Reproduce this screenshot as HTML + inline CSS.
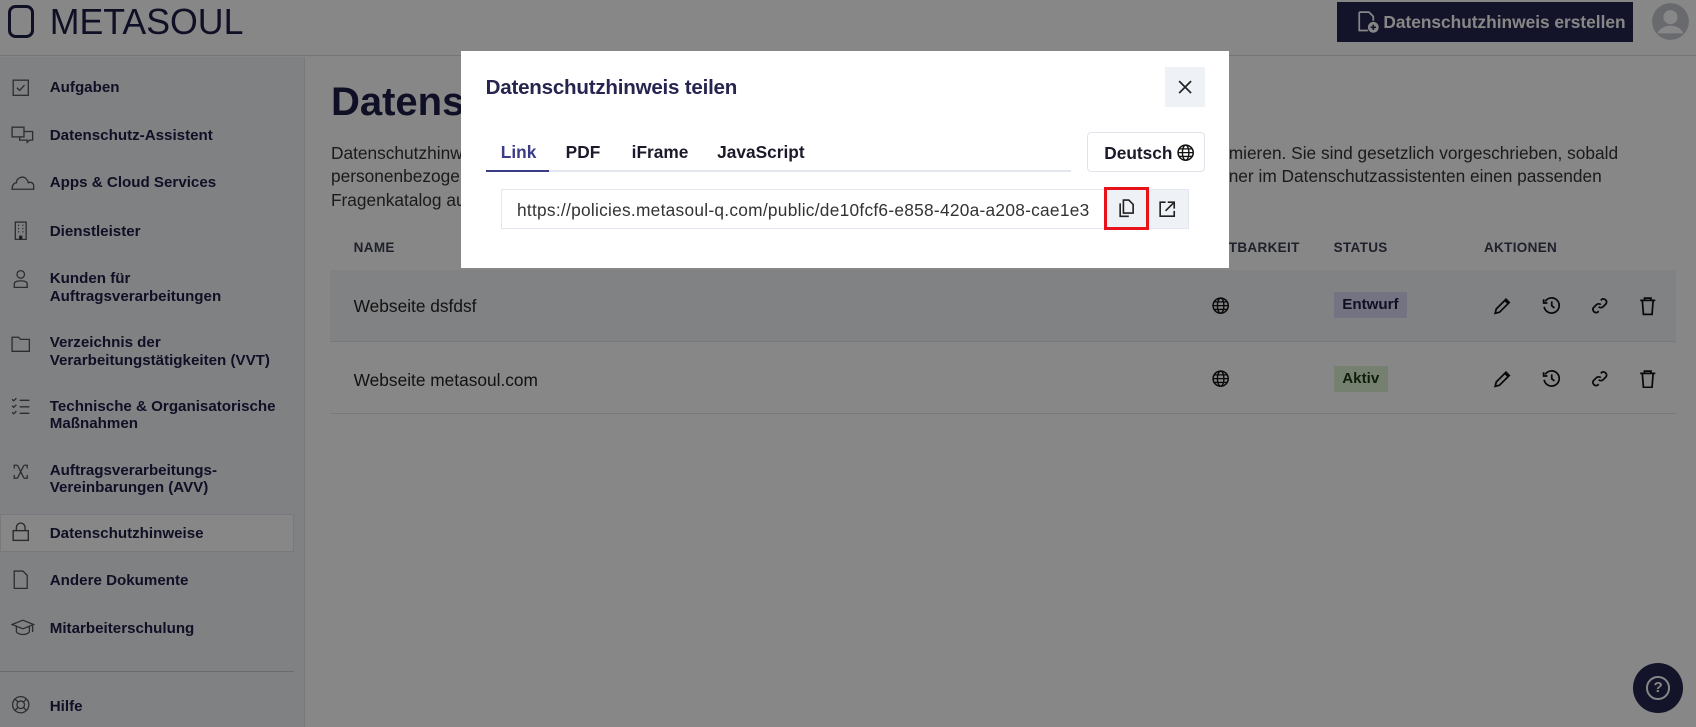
<!DOCTYPE html>
<html><head><meta charset="utf-8"><style>
*{box-sizing:border-box;margin:0;padding:0}
html,body{width:1696px;height:727px;overflow:hidden;background:#fff}
#w{width:1568px;height:672px;position:relative;zoom:1.0816;font-family:"Liberation Sans",Arial,sans-serif;color:#1e1e46;background:#fff;overflow:hidden}
.a{position:absolute}
.nav{position:absolute;left:46px;font-size:14px;font-weight:bold;color:#1e1e46;line-height:16px}
.ic{position:absolute;left:10px;width:18px;height:18px}
.hd{position:absolute;top:222px;font-size:12.5px;font-weight:bold;color:#3a3f52;letter-spacing:.3px}
.rowt{position:absolute;left:327px;font-size:16px;color:#222}
svg{display:block}
</style></head><body><div id="w">
<div class="a" style="left:0;top:0;width:1568px;height:52px;border-bottom:1px solid #ddd;background:#fff"></div>
<div class="a" style="left:7px;top:5px;width:24px;height:30px;border:3.5px solid #1e1e46;border-radius:7px"></div>
<div class="a" style="left:46px;top:2px;font-size:33px;color:#1e1e46;letter-spacing:0px">METASOUL</div>
<div class="a" style="left:1236px;top:2px;width:274px;height:37px;background:#25254f;color:#fff;font-weight:bold;font-size:16px;line-height:37px;padding-left:43px">Datenschutzhinweis erstellen</div>
<svg class="a" style="left:1254px;top:9px" width="22" height="22" viewBox="0 0 22 22"><path d="M3 2h9l4 4v4M3 2v17h8" fill="none" stroke="#fff" stroke-width="1.6"/><circle cx="16" cy="16" r="5" fill="#fff"/><path d="M16 13.5v5M13.5 16h5" stroke="#25254f" stroke-width="1.5"/></svg>
<svg class="a" style="left:1526px;top:2px" width="36" height="36" viewBox="0 0 36 36"><circle cx="18" cy="18" r="17" fill="#c4c8d0"/><circle cx="18" cy="14" r="6.5" fill="#fff"/><path d="M6 29c3-6 8-7 12-7s9 1 12 7" fill="#fff"/></svg>
<div class="a" style="left:0;top:53px;width:282px;height:619px;background:#f1f3f7;border-right:1px solid #e2e4ea"></div>
<div class="a" style="left:0;top:475px;width:272px;height:35px;background:#fff;border:1px solid #e3e5ea"></div>
<div class="a" style="left:0;top:620px;width:272px;height:1px;background:#ccc"></div>
<div class="nav" style="top:73px">Aufgaben</div>
<div class="nav" style="top:117px">Datenschutz-Assistent</div>
<div class="nav" style="top:161px">Apps &amp; Cloud Services</div>
<div class="nav" style="top:206px">Dienstleister</div>
<div class="nav" style="top:250px">Kunden für<br>Auftragsverarbeitungen</div>
<div class="nav" style="top:309px">Verzeichnis der<br>Verarbeitungstätigkeiten (VVT)</div>
<div class="nav" style="top:368px">Technische &amp; Organisatorische<br>Maßnahmen</div>
<div class="nav" style="top:427px">Auftragsverarbeitungs-<br>Vereinbarungen (AVV)</div>
<div class="nav" style="top:485px">Datenschutzhinweise</div>
<div class="nav" style="top:529px">Andere Dokumente</div>
<div class="nav" style="top:573px">Mitarbeiterschulung</div>
<div class="nav" style="top:645px">Hilfe</div>
<svg class="ic" style="top:72px" viewBox="0 0 18 18"><rect x="2" y="2" width="14" height="14" fill="none" stroke="#555" stroke-width="1.2"/><path d="M5.5 9l2.5 2.5 4.5-5" fill="none" stroke="#555" stroke-width="1.2"/></svg>
<svg class="ic" style="top:116px;width:22px" viewBox="0 0 22 18"><rect x="1" y="2" width="11" height="9" fill="none" stroke="#555" stroke-width="1.2"/><path d="M12 6h8v8h-3l-2 2v-2H8v-3" fill="none" stroke="#555" stroke-width="1.2"/></svg>
<svg class="ic" style="top:160px;width:22px" viewBox="0 0 22 18"><path d="M1 15h20v-3c0-3-3-4-5-3-1-4-4-6-7-5-3 1-4 3-4 5-2 0-4 2-4 6z" fill="none" stroke="#555" stroke-width="1.2"/></svg>
<svg class="ic" style="top:204px" viewBox="0 0 18 18"><rect x="4" y="1" width="10" height="16" fill="none" stroke="#555" stroke-width="1.2"/><path d="M6.5 4h1M10.5 4h1M6.5 7h1M10.5 7h1M6.5 10h1M10.5 10h1M8 17v-3h2v3" stroke="#555" stroke-width="1.2"/></svg>
<svg class="ic" style="top:249px" viewBox="0 0 18 18"><circle cx="9" cy="5" r="3.5" fill="none" stroke="#555" stroke-width="1.2"/><path d="M3 17v-3c0-2 2-3 6-3s6 1 6 3v3z" fill="none" stroke="#555" stroke-width="1.2"/></svg>
<svg class="ic" style="top:309px" viewBox="0 0 18 18"><path d="M1 3h6l2 2h8v11H1z" fill="none" stroke="#555" stroke-width="1.2"/></svg>
<svg class="ic" style="top:366px" viewBox="0 0 18 18"><path d="M1 3l1.5 1.5L5 2M1 9l1.5 1.5L5 8M1 15l1.5 1.5L5 14M8 4h9M8 10h9M8 16h9" fill="none" stroke="#555" stroke-width="1.2"/></svg>
<svg class="ic" style="top:427px" viewBox="0 0 18 18"><path d="M3 6V3h3M12 3h3v3M15 12v3h-3M6 15H3v-3M6 3l6 12M12 3L6 15" fill="none" stroke="#555" stroke-width="1.2"/></svg>
<svg class="ic" style="top:483px" viewBox="0 0 18 18"><rect x="2" y="8" width="14" height="9" fill="none" stroke="#555" stroke-width="1.3"/><path d="M5 8V5a4 4 0 018 0v3" fill="none" stroke="#555" stroke-width="1.3"/></svg>
<svg class="ic" style="top:527px" viewBox="0 0 18 18"><path d="M3 1h8l4 4v12H3z" fill="none" stroke="#555" stroke-width="1.2"/></svg>
<svg class="ic" style="top:571px;width:22px" viewBox="0 0 22 18"><path d="M1 6l10-4 10 4-10 4z M5 8v5c3 3 9 3 12 0V8M20 7v6" fill="none" stroke="#555" stroke-width="1.2"/></svg>
<svg class="ic" style="top:643px" viewBox="0 0 18 18"><circle cx="9" cy="9" r="7.5" fill="none" stroke="#555" stroke-width="1.2"/><circle cx="9" cy="9" r="3.5" fill="none" stroke="#555" stroke-width="1.2"/><path d="M4 4l2.5 2.5M14 4l-2.5 2.5M4 14l2.5-2.5M14 14l-2.5-2.5" stroke="#555" stroke-width="1.2"/></svg>
<div class="a" style="left:306px;top:74px;font-size:37px;font-weight:bold;color:#1e1e46">Datenschutzhinweise</div>
<div class="a" style="left:306px;top:131px;font-size:16px;line-height:22px;color:#333;white-space:nowrap">Datenschutzhinweise<br>personenbezogene<br>Fragenkatalog aus</div>
<div class="a" style="left:1136px;top:131px;font-size:16px;line-height:22px;color:#333;white-space:nowrap">mieren. Sie sind gesetzlich vorgeschrieben, sobald<br>ner im Datenschutzassistenten einen passenden</div>
<div class="hd" style="left:327px">NAME</div>
<div class="hd" style="left:1105px">SICHTBARKEIT</div>
<div class="hd" style="left:1233px">STATUS</div>
<div class="hd" style="left:1372px">AKTIONEN</div>
<div class="a" style="left:305px;top:250px;width:1245px;height:66px;background:#f4f5f8;border-bottom:1px solid #e3e5ea"></div>
<div class="a" style="left:305px;top:382px;width:1245px;height:1px;background:#e3e5ea"></div>
<div class="rowt" style="top:274px">Webseite dsfdsf</div>
<div class="rowt" style="top:342px">Webseite metasoul.com</div>
<div class="a" style="left:1233px;top:270px;height:24px;padding:0 8px;line-height:24px;background:#d9d9f5;font-weight:bold;font-size:14px;color:#1e1e46">Entwurf</div>
<div class="a" style="left:1233px;top:338px;height:24px;padding:0 8px;line-height:24px;background:#dff2d4;font-weight:bold;font-size:14px;color:#1c3a12">Aktiv</div>
<svg width="0" height="0" style="position:absolute"><defs>
<g id="gl"><circle cx="8" cy="8" r="7" fill="none" stroke="#111" stroke-width="1.4"/><ellipse cx="8" cy="8" rx="3" ry="7" fill="none" stroke="#111" stroke-width="1.3"/><path d="M1 8h14M2 4.5h12M2 11.5h12" stroke="#111" stroke-width="1.2"/></g>
<g id="pe"><path d="M2 16l1-4 9-9 3 3-9 9z M11 4l3 3" fill="none" stroke="#111" stroke-width="1.6"/></g>
<g id="hi"><path d="M3 5a7 7 0 11-1 5M1.5 3v3.5H5M9 5v4l2.5 2" fill="none" stroke="#111" stroke-width="1.6"/></g>
<g id="li"><path d="M8 10a3 3 0 004 0l3-3a3 3 0 00-4-4l-1 1M10 8a3 3 0 00-4 0l-3 3a3 3 0 004 4l1-1" fill="none" stroke="#111" stroke-width="1.6"/></g>
<g id="tr"><path d="M2 4h14M6 4V2h6v2M4 4l1 13h8l1-13" fill="none" stroke="#111" stroke-width="1.6"/></g>
</defs></svg>
<svg class="a" style="left:1121px;top:275px" width="16" height="16"><use href="#gl"/></svg>
<svg class="a" style="left:1121px;top:342px" width="16" height="16"><use href="#gl"/></svg>
<svg class="a" style="left:1380px;top:274px" width="18" height="18"><use href="#pe"/></svg>
<svg class="a" style="left:1426px;top:274px" width="18" height="18"><use href="#hi"/></svg>
<svg class="a" style="left:1470px;top:274px" width="18" height="18"><use href="#li"/></svg>
<svg class="a" style="left:1514px;top:274px" width="18" height="18"><use href="#tr"/></svg>
<svg class="a" style="left:1380px;top:341px" width="18" height="18"><use href="#pe"/></svg>
<svg class="a" style="left:1426px;top:341px" width="18" height="18"><use href="#hi"/></svg>
<svg class="a" style="left:1470px;top:341px" width="18" height="18"><use href="#li"/></svg>
<svg class="a" style="left:1514px;top:341px" width="18" height="18"><use href="#tr"/></svg>
<div class="a" style="left:1510px;top:613px;width:46px;height:46px;border-radius:50%;background:#25254f"></div>
<div class="a" style="left:1522px;top:625px;width:22px;height:22px;border-radius:50%;border:2px solid #fff;color:#fff;font-weight:bold;font-size:14px;line-height:18px;text-align:center">?</div>
<div class="a" style="left:0;top:0;width:1568px;height:672px;background:rgba(0,0,0,.47)"></div>
<div class="a" style="left:426px;top:47px;width:710px;height:201px;background:#fff"></div>
<div class="a" style="left:449px;top:70px;font-size:19px;font-weight:bold;color:#25254f;letter-spacing:-.2px">Datenschutzhinweis teilen</div>
<div class="a" style="left:1077px;top:62px;width:37px;height:37px;background:#eef1f5"></div>
<svg class="a" style="left:1088px;top:73px" width="15" height="15"><path d="M2 2l11 11M13 2L2 13" stroke="#222" stroke-width="1.6"/></svg>
<div class="a" style="left:449px;top:157px;width:541px;height:2px;background:#e3e6ee"></div>
<div class="a" style="left:449px;top:157px;width:59px;height:2px;background:#3b3b86"></div>
<div class="a" style="left:463px;top:131px;font-size:16px;font-weight:bold;color:#3b3b86">Link</div>
<div class="a" style="left:523px;top:131px;font-size:16px;font-weight:bold;color:#1a1a2a">PDF</div>
<div class="a" style="left:584px;top:131px;font-size:16px;font-weight:bold;color:#1a1a2a">iFrame</div>
<div class="a" style="left:663px;top:131px;font-size:16px;font-weight:bold;color:#1a1a2a">JavaScript</div>
<div class="a" style="left:1005px;top:122px;width:109px;height:37px;border:1px solid #e0e3ea;border-radius:4px;font-size:16px;font-weight:bold;line-height:37px;padding-left:15px;color:#1a1a2a">Deutsch</div>
<svg class="a" style="left:1088px;top:133px" width="16" height="16"><use href="#gl"/></svg>
<div class="a" style="left:463px;top:175px;width:636px;height:37px;border:1px solid #e3e6ee"></div>
<div class="a" style="left:478px;top:185px;font-size:16px;color:#333;letter-spacing:.25px">https://policies.metasoul-q.com/public/de10fcf6-e858-420a-a208-cae1e3</div>
<div class="a" style="left:1061px;top:176px;width:37px;height:35px;background:#eef1f5"></div>
<div class="a" style="left:1021px;top:173px;width:41px;height:40px;border:3px solid #e8121b;background:#eef1f5"></div>
<svg class="a" style="left:1034px;top:184px" width="16" height="18"><path d="M5 1h5l4 4v8H5z M2 4v12h8" fill="none" stroke="#222" stroke-width="1.5"/></svg>
<svg class="a" style="left:1071px;top:185px" width="17" height="17"><path d="M7 2H2v13h13v-5M9 2h6v6M15 2L7 10" fill="none" stroke="#222" stroke-width="1.5"/></svg>
</div></body></html>
